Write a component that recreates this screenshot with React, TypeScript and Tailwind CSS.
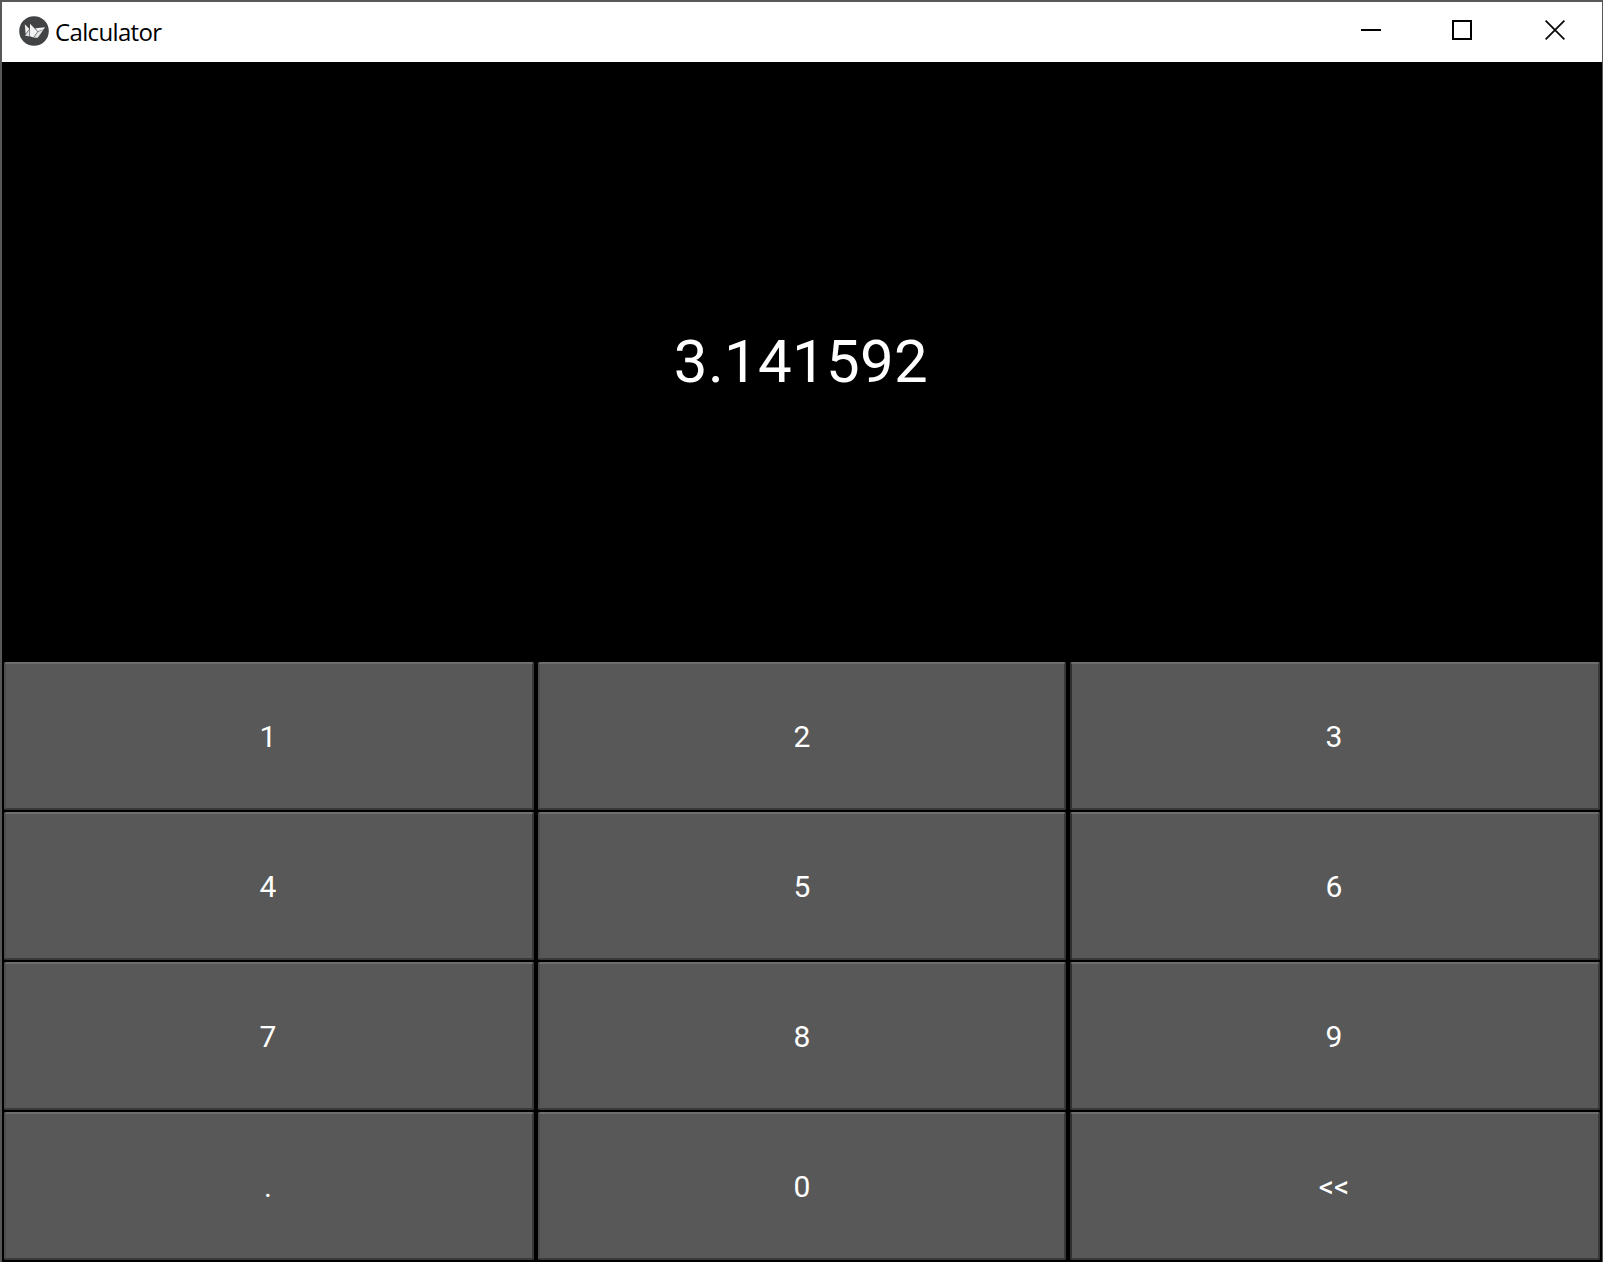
const rows = [
  ["1", "2", "3"],
  ["4", "5", "6"],
  ["7", "8", "9"],
  [".", "0", "<<"],
];

function AppLogo() {
  return (
    <svg width="30" height="30" viewBox="0 0 30 30" aria-hidden="true">
      <circle cx="15" cy="15" r="14.8" fill="#414345" />
      <path d="M5.8 8.3 10.4 13 6.6 17.8Z" fill="#f0f0f0" />
      <path d="M6 19.6 10.4 13.8V20.4Z" fill="#e4e4e4" />
      <path d="M11 7.8 18.5 15.4 14.4 21.6 10.9 20.2Z" fill="#f2f2f2" />
      <path d="M16.4 12.2 26.2 11.2 24.4 13.4 18.8 15.2Z" fill="#f2f2f2" />
      <path d="M19 15.7 24.4 13.8 18.8 21.7 14.9 21.7Z" fill="#e6e6e6" />
    </svg>
  );
}

function TitleBar() {
  return (
    <header className="flex h-[60px] shrink-0 items-start bg-white">
      <div className="flex flex-1 items-start pl-[17px]">
        <div className="mt-[14px]">
          <AppLogo />
        </div>
        <h1 className="mt-[14px] ml-[6px] font-['Open_Sans',sans-serif] text-[24px] leading-[32px] font-normal tracking-[-0.65px] text-black">
          Calculator
        </h1>
      </div>
      <div className="flex pr-[37px] text-black">
        <button aria-label="Minimize" className="mt-[18px] mr-[71px] h-[20px] w-[20px]">
          <svg width="20" height="20" shapeRendering="crispEdges">
            <rect x="0" y="9" width="20" height="2" />
          </svg>
        </button>
        <button aria-label="Maximize" className="mt-[18px] mr-[73px] h-[20px] w-[20px] border-2 border-black" />
        <button aria-label="Close" className="mt-[18px] h-[20px] w-[20px]">
          <svg width="20" height="20" fill="none" stroke="#0a0a0a" strokeWidth="1.8">
            <path d="M.6.6 19.4 19.4M19.4.6.6 19.4" />
          </svg>
        </button>
      </div>
    </header>
  );
}

function Key({ label }: { label: string }) {
  return (
    <button className="flex h-[148px] items-center justify-center rounded-[2px] border-2 border-t-[#6e6e6e] border-r-[#393939] border-b-[#393939] border-l-[#4e4e4e] bg-[#585858] pt-[1px] pr-[2px] text-[30px] leading-[36px] text-white nth-[3n]:border-l-[#303030] nth-[3n+2]:pr-0">
      {label}
    </button>
  );
}

export default function App() {
  return (
    <div className="flex h-[1262px] w-[1603px] flex-col overflow-hidden border-t-2 border-r border-l-2 border-[#585858] bg-black font-['Roboto',sans-serif]">
      <TitleBar />
      <output className="flex h-[600px] shrink-0 items-center justify-center pr-[2px] text-[60px] leading-[70px] tracking-[0.3px] text-white">
        3.141592
      </output>
      <main className="grid grid-cols-[530px_528px_530px] gap-x-[4px] gap-y-[2px] pl-[2px]">
        {rows.flat().map((label) => (
          <Key key={label} label={label} />
        ))}
      </main>
    </div>
  );
}
